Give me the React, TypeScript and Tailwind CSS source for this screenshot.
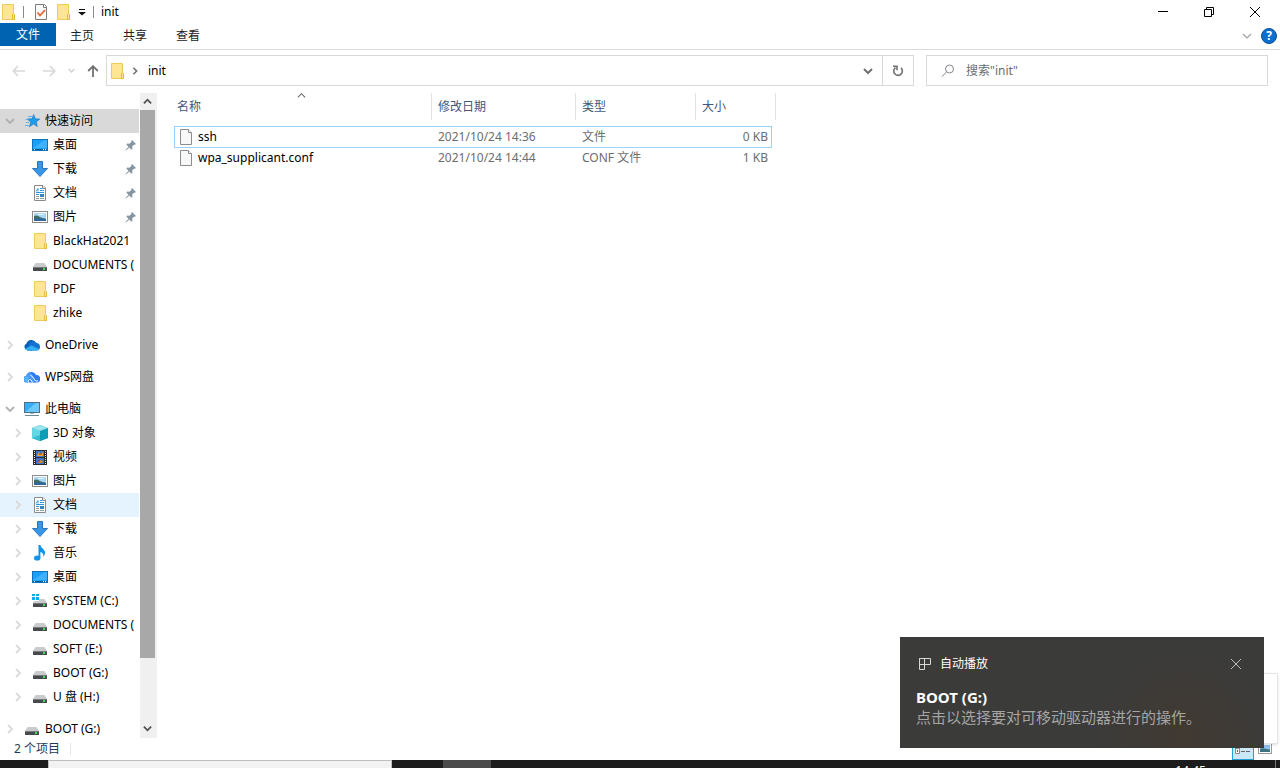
import React from "react";

type Kind =
  | "star" | "desktop" | "download" | "document" | "picture" | "folder" | "drive"
  | "onedrive" | "wps" | "pc" | "cube" | "video" | "music" | "system";

function FolderIcon() {
  return (
    <svg width="16" height="16" viewBox="0 0 16 16" className="shrink-0">
      <path d="M2.5 .5h11v10h1v5h-12z" fill="#ffe594" stroke="#eecb57" />
      <path d="M12.5 15.5v-5l1-1 1 1v5z" fill="#ffe594" stroke="#e5b93a" />
    </svg>
  );
}

function Icon({ kind }: { kind: Kind }) {
  if (kind === "folder") return <FolderIcon />;
  return (
    <svg width="16" height="16" viewBox="0 0 16 16" className="shrink-0">
      {kind === "star" && (
        <>
          <path d="M9.7 1.5l1.6 4.3 4.5.3-3.5 2.8 1 4.600-3.800-2.400-4 2.600 1.200-4.600L3.200 6l4.700-.200z" fill="#1e9bea" stroke="#1574bd" strokeWidth=".6" />
          <path d="M4 3.500h4M1.500 6.500h3M2 9.500h3M1 12.500h4" stroke="#5bb4ee" strokeWidth="1" />
        </>
      )}
      {kind === "desktop" && (
        <>
          <rect x=".5" y="2.500" width="15" height="11" fill="#18a0fb" stroke="#1272b8" />
          <path d="M1 11L13 3h2v8z" fill="#3fb2ff" />
          <path d="M1 12.500h14" stroke="#0a5d9c" />
          <path d="M2 12.500h1M11 12.500h1M13 12.500h1" stroke="#fff" />
        </>
      )}
      {kind === "download" && (
        <path d="M5.500.500h5v7h5L8 15.500.500 7.500h5z" fill="#3a96e4" stroke="#2a77bf" />
      )}
      {kind === "document" && (
        <>
          <path d="M2.500.500h8.500l2.500 2.500v12.500h-11z" fill="#fff" stroke="#8a8a8a" />
          <path d="M10.500.500v3h3" fill="#e8e8e8" stroke="#8a8a8a" />
          <path d="M4 6.500l2-3v3M8 3.500h2M8 5.500h4M4 7.500h8M4 9.500h3" stroke="#2f97dc" fill="none" />
          <path d="M4 11.500h3M4 13.500h3" stroke="#9a9a9a" />
          <rect x="8" y="9" width="4" height="3" fill="#3b83b8" />
          <path d="M8 13.500h4" stroke="#9a9a9a" />
        </>
      )}
      {kind === "picture" && (
        <>
          <rect x=".5" y="2.500" width="15" height="11" fill="#fff" stroke="#8b8b8b" />
          <rect x="2" y="4" width="12" height="8" fill="#a9d6f5" />
          <path d="M6 5.500h6" stroke="#e9f6ff" />
          <path d="M2 7c3-1.500 5 .5 7 1.500s3 .5 5 1.500H2z" fill="#3f6f62" />
          <path d="M2 10c4-1 8-1 12 0v2H2z" fill="#2f669f" />
        </>
      )}
      {(kind === "drive" || kind === "system") && (
        <>
          <path d="M3.500 6h9l2.500 4H1z" fill="#c9cbce" />
          <rect x="1" y="10" width="14" height="4" rx=".5" fill="#474b4e" />
          <path d="M1 10.500h14" stroke="#75797c" />
          <rect x="11" y="11" width="2" height="2" fill="#3ee05a" />
          {kind === "system" && (
            <>
              <rect x="0" y="1" width="7" height="7" fill="#fff" />
              <path d="M0 1h3v2H0zM4 1h3v2H4zM0 4h3v3H0zM4 4h3v3H4z" fill="#11a9ee" />
            </>
          )}
        </>
      )}
      {kind === "onedrive" && (
        <>
          <path d="M3.500 13.500A3.700 3.700 0 0 1 2.500 6.500 5.300 5.300 0 0 1 12 5.500L8 13.500z" fill="#0b61b7" />
          <path d="M5 7.500a4.600 4.600 0 0 1 7.500-1.500A3.800 3.800 0 0 1 13 13.500H4z" fill="#1374cf" />
          <path d="M.5 12l7-3.500 7.500 3.500-1.500 1.500h-10z" fill="#31b0f4" />
        </>
      )}
      {kind === "wps" && (
        <>
          <path d="M3 13.500A3.300 3.300 0 0 1 2.200 6.900 5.200 5.200 0 0 1 12 6a3.500 3.500 0 0 1 1 7.500z" fill="#2f7cf6" />
          <path d="M0 10.500A3.200 3.200 0 0 1 5.500 8L3.500 13.500A3 3 0 0 1 0 10.500z" fill="#56b4fc" />
          <path d="M2.200 7A5 5 0 0 1 6.500 3.200L12.500 13.500H9L6 9z" fill="#4b9bfa" />
          <path d="M4.500 13.500c-.8-2 .8-4 2.500-2.500l1.500 2.500M6.500 6.500c2 .5 3 2.500 4 4s2 2 3.500 1.200" stroke="#fff" fill="none" strokeWidth="1" />
        </>
      )}
      {kind === "pc" && (
        <>
          <rect x=".5" y="1.500" width="15" height="10" fill="#35adf7" stroke="#526f83" />
          <path d="M1 11L12 2h3v9z" fill="#6cc8ff" />
          <path d="M6 12.500h4" stroke="#a6b4bd" />
          <path d="M1 14.500h14" stroke="#6f8797" />
        </>
      )}
      {kind === "cube" && (
        <>
          <path d="M0 3L8 0l8 3v10l-8 3-8-3z" fill="#17a2b8" />
          <path d="M0 3l8 3v10l-8-3z" fill="#63d6e4" />
          <path d="M8 6l8-3v10l-8 3z" fill="#0d9bb5" />
          <path d="M0 3L8 0l8 3-8 3z" fill="#9be4ec" />
          <path d="M0 13l8-3v6z" fill="#35bdd0" />
        </>
      )}
      {kind === "video" && (
        <>
          <rect x="1" y="1" width="14" height="15" fill="#2b2b2b" />
          <path d="M2.500 2v14M13.500 2v14" stroke="#e4e4e4" strokeDasharray="1 1" />
          <rect x="4" y="2" width="8" height="6" fill="#4377c8" />
          <rect x="4" y="9" width="8" height="6" fill="#3f73c8" />
          <path d="M5 7l2-4 2 2 2-2v4z" fill="#e7a631" />
          <path d="M6 14l2-3 3 1-1 2z" fill="#d8872f" />
          <path d="M7 5h3M6 12h2" stroke="#b2262e" />
        </>
      )}
      {kind === "music" && (
        <>
          <ellipse cx="5.200" cy="13" rx="3.200" ry="2.600" fill="#0b93ee" />
          <path d="M6.500 0h2c0 3 4.500 4 4.500 7.500 0 2-.7 3.200-1.800 4.500.800-3-1-4.500-2.800-5V13H6.500z" fill="#0b93ee" />
        </>
      )}
    </svg>
  );
}

type ChevronDir = "right" | "down" | "up";

function Chevron({ dir, color, size = 10, weight = 1.5 }: { dir: ChevronDir; color: string; size?: number; weight?: number }) {
  const d = dir === "right" ? "M3 1l4 4-4 4" : dir === "down" ? "M1 3l4 4 4-4" : "M1 7l4-4 4 4";
  return (
    <svg width={size} height={size} viewBox="0 0 10 10" fill="none" stroke={color} strokeWidth={weight} className="shrink-0">
      <path d={d} />
    </svg>
  );
}

function Pin() {
  return (
    <svg width="12" height="12" viewBox="0 0 12 12" className="shrink-0">
      <path d="M7 1l4 4-1 .800-.800-.200-2 2 .200 2.200-1 1-2.200-2.200L1 11.500.500 11l3-3.200L1.300 5.600l1-1 2.200.200 2-2L6.200 2z" fill="#8795a1" />
    </svg>
  );
}

type NavItem = {
  label: string;
  icon: Kind;
  level: 1 | 2;
  arrow?: "right" | "down";
  pinned?: boolean;
  state?: "selected" | "hover";
};

const groups: NavItem[][] = [
  [
    { label: "快速访问", icon: "star", level: 1, arrow: "down", state: "selected" },
    { label: "桌面", icon: "desktop", level: 2, pinned: true },
    { label: "下载", icon: "download", level: 2, pinned: true },
    { label: "文档", icon: "document", level: 2, pinned: true },
    { label: "图片", icon: "picture", level: 2, pinned: true },
    { label: "BlackHat2021", icon: "folder", level: 2 },
    { label: "DOCUMENTS (", icon: "drive", level: 2 },
    { label: "PDF", icon: "folder", level: 2 },
    { label: "zhike", icon: "folder", level: 2 },
  ],
  [{ label: "OneDrive", icon: "onedrive", level: 1, arrow: "right" }],
  [{ label: "WPS网盘", icon: "wps", level: 1, arrow: "right" }],
  [
    { label: "此电脑", icon: "pc", level: 1, arrow: "down" },
    { label: "3D 对象", icon: "cube", level: 2, arrow: "right" },
    { label: "视频", icon: "video", level: 2, arrow: "right" },
    { label: "图片", icon: "picture", level: 2, arrow: "right" },
    { label: "文档", icon: "document", level: 2, arrow: "right", state: "hover" },
    { label: "下载", icon: "download", level: 2, arrow: "right" },
    { label: "音乐", icon: "music", level: 2, arrow: "right" },
    { label: "桌面", icon: "desktop", level: 2, arrow: "right" },
    { label: "SYSTEM (C:)", icon: "system", level: 2, arrow: "right" },
    { label: "DOCUMENTS (", icon: "drive", level: 2, arrow: "right" },
    { label: "SOFT (E:)", icon: "drive", level: 2, arrow: "right" },
    { label: "BOOT (G:)", icon: "drive", level: 2, arrow: "right" },
    { label: "U 盘 (H:)", icon: "drive", level: 2, arrow: "right" },
  ],
  [{ label: "BOOT (G:)", icon: "drive", level: 1, arrow: "right" }],
];

const files = [
  { name: "ssh", date: "2021/10/24 14:36", type: "文件", size: "0 KB", focused: true },
  { name: "wpa_supplicant.conf", date: "2021/10/24 14:44", type: "CONF 文件", size: "1 KB", focused: false },
];

function NavRow({ item }: { item: NavItem }) {
  const bg = item.state === "selected" ? "bg-[#d9d9d9]" : item.state === "hover" ? "bg-[#e5f3ff]" : "";
  return (
    <a href="#" className={`mr-px flex h-6 items-center overflow-hidden ${item.level === 1 ? "pl-[2px]" : "pl-[10px]"} ${bg}`}>
      <span className="flex w-4 shrink-0 justify-center">
        {item.arrow && <Chevron dir={item.arrow} color={item.arrow === "down" ? "#b0b0b0" : "#dadada"} weight={1.8} />}
      </span>
      <span className="ml-[6px] shrink-0"><Icon kind={item.icon} /></span>
      <span className="ml-[5px] flex-1 overflow-hidden whitespace-nowrap">{item.label}</span>
      {item.pinned && <span className="mr-[2px]"><Pin /></span>}
    </a>
  );
}

function TitleBar() {
  return (
    <header className="flex h-[23px] shrink-0 items-center">
      <FolderIcon />
      <span className="ml-[7px] h-3 w-px bg-[#8a8a8a]" />
      <button type="button" aria-label="属性" className="ml-[9px]">
        <svg width="16" height="16" viewBox="0 0 16 16" fill="none">
          <path d="M2.500.500h9l2 2v13h-11z" fill="#fafafa" stroke="#7d7d7d" />
          <path d="M10.500.500v3h3" stroke="#7d7d7d" />
          <path d="M4.500 8.500l2.500 3 5-5.500" stroke="#e8622c" strokeWidth="1.800" />
        </svg>
      </button>
      <button type="button" aria-label="新建文件夹" className="ml-[6px]"><FolderIcon /></button>
      <button type="button" aria-label="自定义" className="ml-[7px]">
        <svg width="8" height="8" viewBox="0 0 8 8"><path d="M1 1.500h6" stroke="#111" /><path d="M0 4h8L4 7.500z" fill="#111" /></svg>
      </button>
      <span className="ml-[7px] h-3 w-px bg-[#8a8a8a]" />
      <h1 className="ml-[7px]">init</h1>
      <div className="ml-auto flex h-full pr-[2px]">
        <button type="button" aria-label="最小化" className="flex w-[46px] items-center justify-center">
          <svg width="10" height="10" viewBox="0 0 10 10"><path d="M0 4.500h10" stroke="#000" /></svg>
        </button>
        <button type="button" aria-label="还原" className="flex w-[46px] items-center justify-center">
          <svg width="10" height="10" viewBox="0 0 10 10" fill="none" stroke="#000"><path d="M.500 2.500h7v7h-7zM2.500 2.500v-2h7v7h-2" /></svg>
        </button>
        <button type="button" aria-label="关闭" className="flex w-[46px] items-center justify-center">
          <svg width="10" height="10" viewBox="0 0 10 10" stroke="#000"><path d="M0 0l10 10M10 0L0 10" /></svg>
        </button>
      </div>
    </header>
  );
}

function Ribbon() {
  return (
    <nav className="flex h-[27px] shrink-0 items-start border-b border-[#dadbdc] text-[#222]">
      <button type="button" className="h-[23px] w-14 bg-[#0063b1] text-white">文件</button>
      {["主页", "共享", "查看"].map((tab) => (
        <button type="button" key={tab} className="h-[26px] w-[53px] pl-[14px] text-left">{tab}</button>
      ))}
      <div className="ml-auto flex h-[26px] items-center gap-[9px] pr-[3px]">
        <button type="button" aria-label="展开功能区"><Chevron dir="down" color="#a0a0a0" weight={1.2} /></button>
        <button type="button" aria-label="帮助" className="flex h-4 w-4 items-center justify-center rounded-full border border-[#0a4f96] bg-[#0a6fce] text-[12px] leading-[14px] font-bold text-white">?</button>
      </div>
    </nav>
  );
}

function AddressRow() {
  return (
    <div className="flex h-[43px] shrink-0 items-start pt-[5px] pr-3">
      <div className="flex h-[31px] w-[106px] shrink-0 items-center pl-3">
        <button type="button" aria-label="后退">
          <svg width="14" height="12" viewBox="0 0 14 12" fill="none" stroke="#d9d9d9" strokeWidth="1.700"><path d="M13 6H1.500M6 1.200L1.200 6 6 10.800" /></svg>
        </button>
        <button type="button" aria-label="前进" className="ml-4">
          <svg width="14" height="12" viewBox="0 0 14 12" fill="none" stroke="#d9d9d9" strokeWidth="1.700"><path d="M1 6h11.500M8 1.200L12.800 6 8 10.800" /></svg>
        </button>
        <button type="button" aria-label="最近位置" className="ml-3"><Chevron dir="down" color="#d0d0d0" size={7} weight={2} /></button>
        <button type="button" aria-label="上移" className="ml-[12px]">
          <svg width="12" height="12" viewBox="0 0 12 12" fill="none" stroke="#707070" strokeWidth="1.800"><path d="M6 12V1.500M1.200 6L6 1.200 10.800 6" /></svg>
        </button>
      </div>
      <div className="flex h-[31px] flex-1 items-center border border-[#d9d9d9]">
        <span className="ml-[2px] flex"><FolderIcon /></span>
        <span className="ml-[6px] flex"><Chevron dir="right" color="#707070" size={8} weight={2} /></span>
        <span className="ml-[9px] flex-1">init</span>
        <button type="button" aria-label="以前的位置" className="flex w-7 justify-center"><Chevron dir="down" color="#707070" weight={2} /></button>
        <button type="button" aria-label="刷新" className="flex h-full w-[31px] items-center justify-center border-l border-[#d9d9d9]">
          <svg width="12" height="12" viewBox="0 0 12 12" fill="none" stroke="#707070" strokeWidth="1.600"><path d="M3.500 2.600a4.300 4.300 0 1 0 5.500.300M1 1.300h4v4" /></svg>
        </button>
      </div>
      <label className="ml-3 flex h-[31px] w-[342px] items-center border border-[#d9d9d9] pl-[14px]">
        <svg width="14" height="14" viewBox="0 0 14 14" fill="none" stroke="#85858c"><circle cx="8.500" cy="5" r="4" /><path d="M5.500 8L.800 12.700" /></svg>
        <input type="text" aria-label="搜索" placeholder={'搜索"init"'} className="ml-[11px] min-w-0 flex-1 outline-none placeholder:text-[#6d6d6d]" />
      </label>
    </div>
  );
}

function Sidebar() {
  return (
    <aside className="flex w-[157px] shrink-0 border-r border-[#f0f0f0]">
      <div className="flex w-[140px] flex-col gap-2 overflow-hidden pt-4">
        {groups.map((group, i) => (
          <div key={i} className="shrink-0">
            {group.map((item, j) => <NavRow key={j} item={item} />)}
          </div>
        ))}
      </div>
      <div className="flex w-[16px] flex-col bg-[#f0f0f0] pr-px">
        <button type="button" aria-label="向上滚动" className="flex h-[17px] items-center justify-center"><Chevron dir="up" color="#505050" size={9} weight={2} /></button>
        <div className="min-h-0 flex-1"><div className="h-[90%] bg-[#a8a8a8]" /></div>
        <button type="button" aria-label="向下滚动" className="flex h-[19px] items-center justify-center"><Chevron dir="down" color="#505050" size={9} weight={2} /></button>
      </div>
    </aside>
  );
}

function FileTable() {
  const heads = ["名称", "修改日期", "类型", "大小"];
  return (
    <main className="min-w-0 flex-1 overflow-hidden pl-[17px]">
      <table className="w-[602px] table-fixed border-separate border-spacing-0 text-left">
        <colgroup>
          <col className="w-[258px]" />
          <col className="w-[144px]" />
          <col className="w-[120px]" />
          <col className="w-[76px]" />
          <col className="w-1" />
        </colgroup>
        <thead>
          <tr>
            {heads.map((head, i) => (
              <th key={head} colSpan={i === 3 ? 2 : 1} className="h-[33px] p-0 align-top font-normal text-[#43567a]">
                <button type="button" className={`relative h-[27px] w-full border-r border-[#e2e2e2] text-left ${i === 0 ? "pl-[3px]" : "pl-[6px]"}`}>
                  {head}
                  {i === 0 && <span className="absolute -top-[2px] left-[123px]"><Chevron dir="up" color="#6a6a6a" weight={1.2} size={9} /></span>}
                </button>
              </th>
            ))}
          </tr>
        </thead>
        <tbody>
          {files.map((f) => {
            const edge = f.focused ? "border-y border-[#99d1ff]" : "";
            return (
              <tr key={f.name} className="h-5 text-[#6d6d6d]">
                <td className={`p-0 text-black ${edge} ${f.focused ? "border-l pl-[3px]" : "pl-1"}`}>
                  <span className="flex h-5 items-center gap-[4px]">
                    <svg width="16" height="16" viewBox="0 0 16 16" fill="none" stroke="#8c8c8c">
                      <path d="M2.500.500h8l3 3v12h-11z" fill="#f8f8f8" /><path d="M10.500.500v3h3" fill="#fff" />
                    </svg>
                    {f.name}
                  </span>
                </td>
                <td className={`p-0 pl-[6px] ${edge}`}>{f.date}</td>
                <td className={`p-0 pl-[6px] ${edge}`}>{f.type}</td>
                <td className={`p-0 text-right ${edge} ${f.focused ? "border-r pr-[3px]" : "pr-1"}`}>{f.size}</td>
                <td className="p-0" />
              </tr>
            );
          })}
        </tbody>
      </table>
    </main>
  );
}

function StatusBar() {
  return (
    <footer className="flex h-[22px] shrink-0 items-center pr-2 pl-[14px] text-[#1e395b]">
      <span>2 个项目</span>
      <span className="ml-[10px] h-3 w-px bg-[#e5e5e5]" />
      <div className="ml-auto flex h-full items-center gap-1">
        <button type="button" aria-label="详细信息" className="flex h-full w-[22px] items-center justify-center border border-[#26a0da] bg-[#cbe8f6]">
          <svg width="16" height="12" viewBox="0 0 16 12" fill="none" stroke="#8a8a8a">
            <path d="M.500.500h4v10h-4zM.500 5.500h4" fill="#fff" />
            <path d="M6 3.500h4M11 3.500h4M6 8.500h4M11 8.500h4" stroke="#666" />
            <path d="M2 3h1" stroke="#2b78d0" strokeWidth="2" /><path d="M2 8h1" stroke="#d03030" strokeWidth="2" />
          </svg>
        </button>
        <button type="button" aria-label="大图标">
          <svg width="14" height="12" viewBox="0 0 14 12"><rect x=".5" y=".5" width="13" height="10" fill="#fff" stroke="#9a9a9a" /><path d="M2 2h10v4H2z" fill="#8fc0ef" /><path d="M2 6c4-2 6 1 10 0v3H2z" fill="#3b7480" /></svg>
        </button>
      </div>
    </footer>
  );
}

function TaskBar() {
  return (
    <div className="flex h-2 shrink-0 items-start overflow-hidden bg-[#1c1c1c] text-white">
      <input type="text" aria-label="任务栏搜索" className="ml-12 h-10 w-[344px] border border-[#bfbfbf] bg-[#f2f2f2]" />
      <span className="ml-[51px] h-10 w-12 bg-[#4a4a4a]" />
      <time className="mt-[2px] ml-auto shrink-0 leading-[18px]">14:45</time>
      <span className="mr-1 ml-[69px] h-10 w-px bg-[#777]" />
    </div>
  );
}

function Toast() {
  return (
    <>
      <div className="absolute right-[2px] bottom-6 h-[71px] w-[360px] border border-[#e6e6e6] bg-white shadow-sm" />
      <section className="absolute right-4 bottom-5 w-[364px] bg-[#3b3b3a] bg-[radial-gradient(circle_at_78%_90%,#413932,#3b3b3a_30%)] px-4 pt-4 pb-[21px] text-white">
        <div className="flex h-[22px] items-center">
          <svg width="12" height="12" viewBox="0 0 12 12" fill="none" stroke="#d8d8d8" className="ml-[3px]"><path d="M.5 .5h11v6h-11zM.5 .5h5v11h-5z" /></svg>
          <span className="ml-[9px]">自动播放</span>
          <button type="button" aria-label="关闭通知" className="mr-[7px] ml-auto">
            <svg width="10" height="10" viewBox="0 0 10 10" stroke="#bdbdbd"><path d="M0 0l10 10M10 0L0 10" /></svg>
          </button>
        </div>
        <h2 className="mt-3 text-[15px] leading-5 font-bold">BOOT (G:)</h2>
        <p className="text-[15px] leading-5 text-[#a6a5a4]">点击以选择要对可移动驱动器进行的操作。</p>
      </section>
    </>
  );
}

export default function App() {
  return (
    <div className="relative flex h-screen flex-col overflow-hidden bg-white font-['Noto_Sans','Noto_Sans_CJK_SC',sans-serif] text-[12px] leading-4 text-black">
      <TitleBar />
      <Ribbon />
      <AddressRow />
      <div className="flex min-h-0 flex-1">
        <Sidebar />
        <FileTable />
      </div>
      <StatusBar />
      <TaskBar />
      <Toast />
    </div>
  );
}
